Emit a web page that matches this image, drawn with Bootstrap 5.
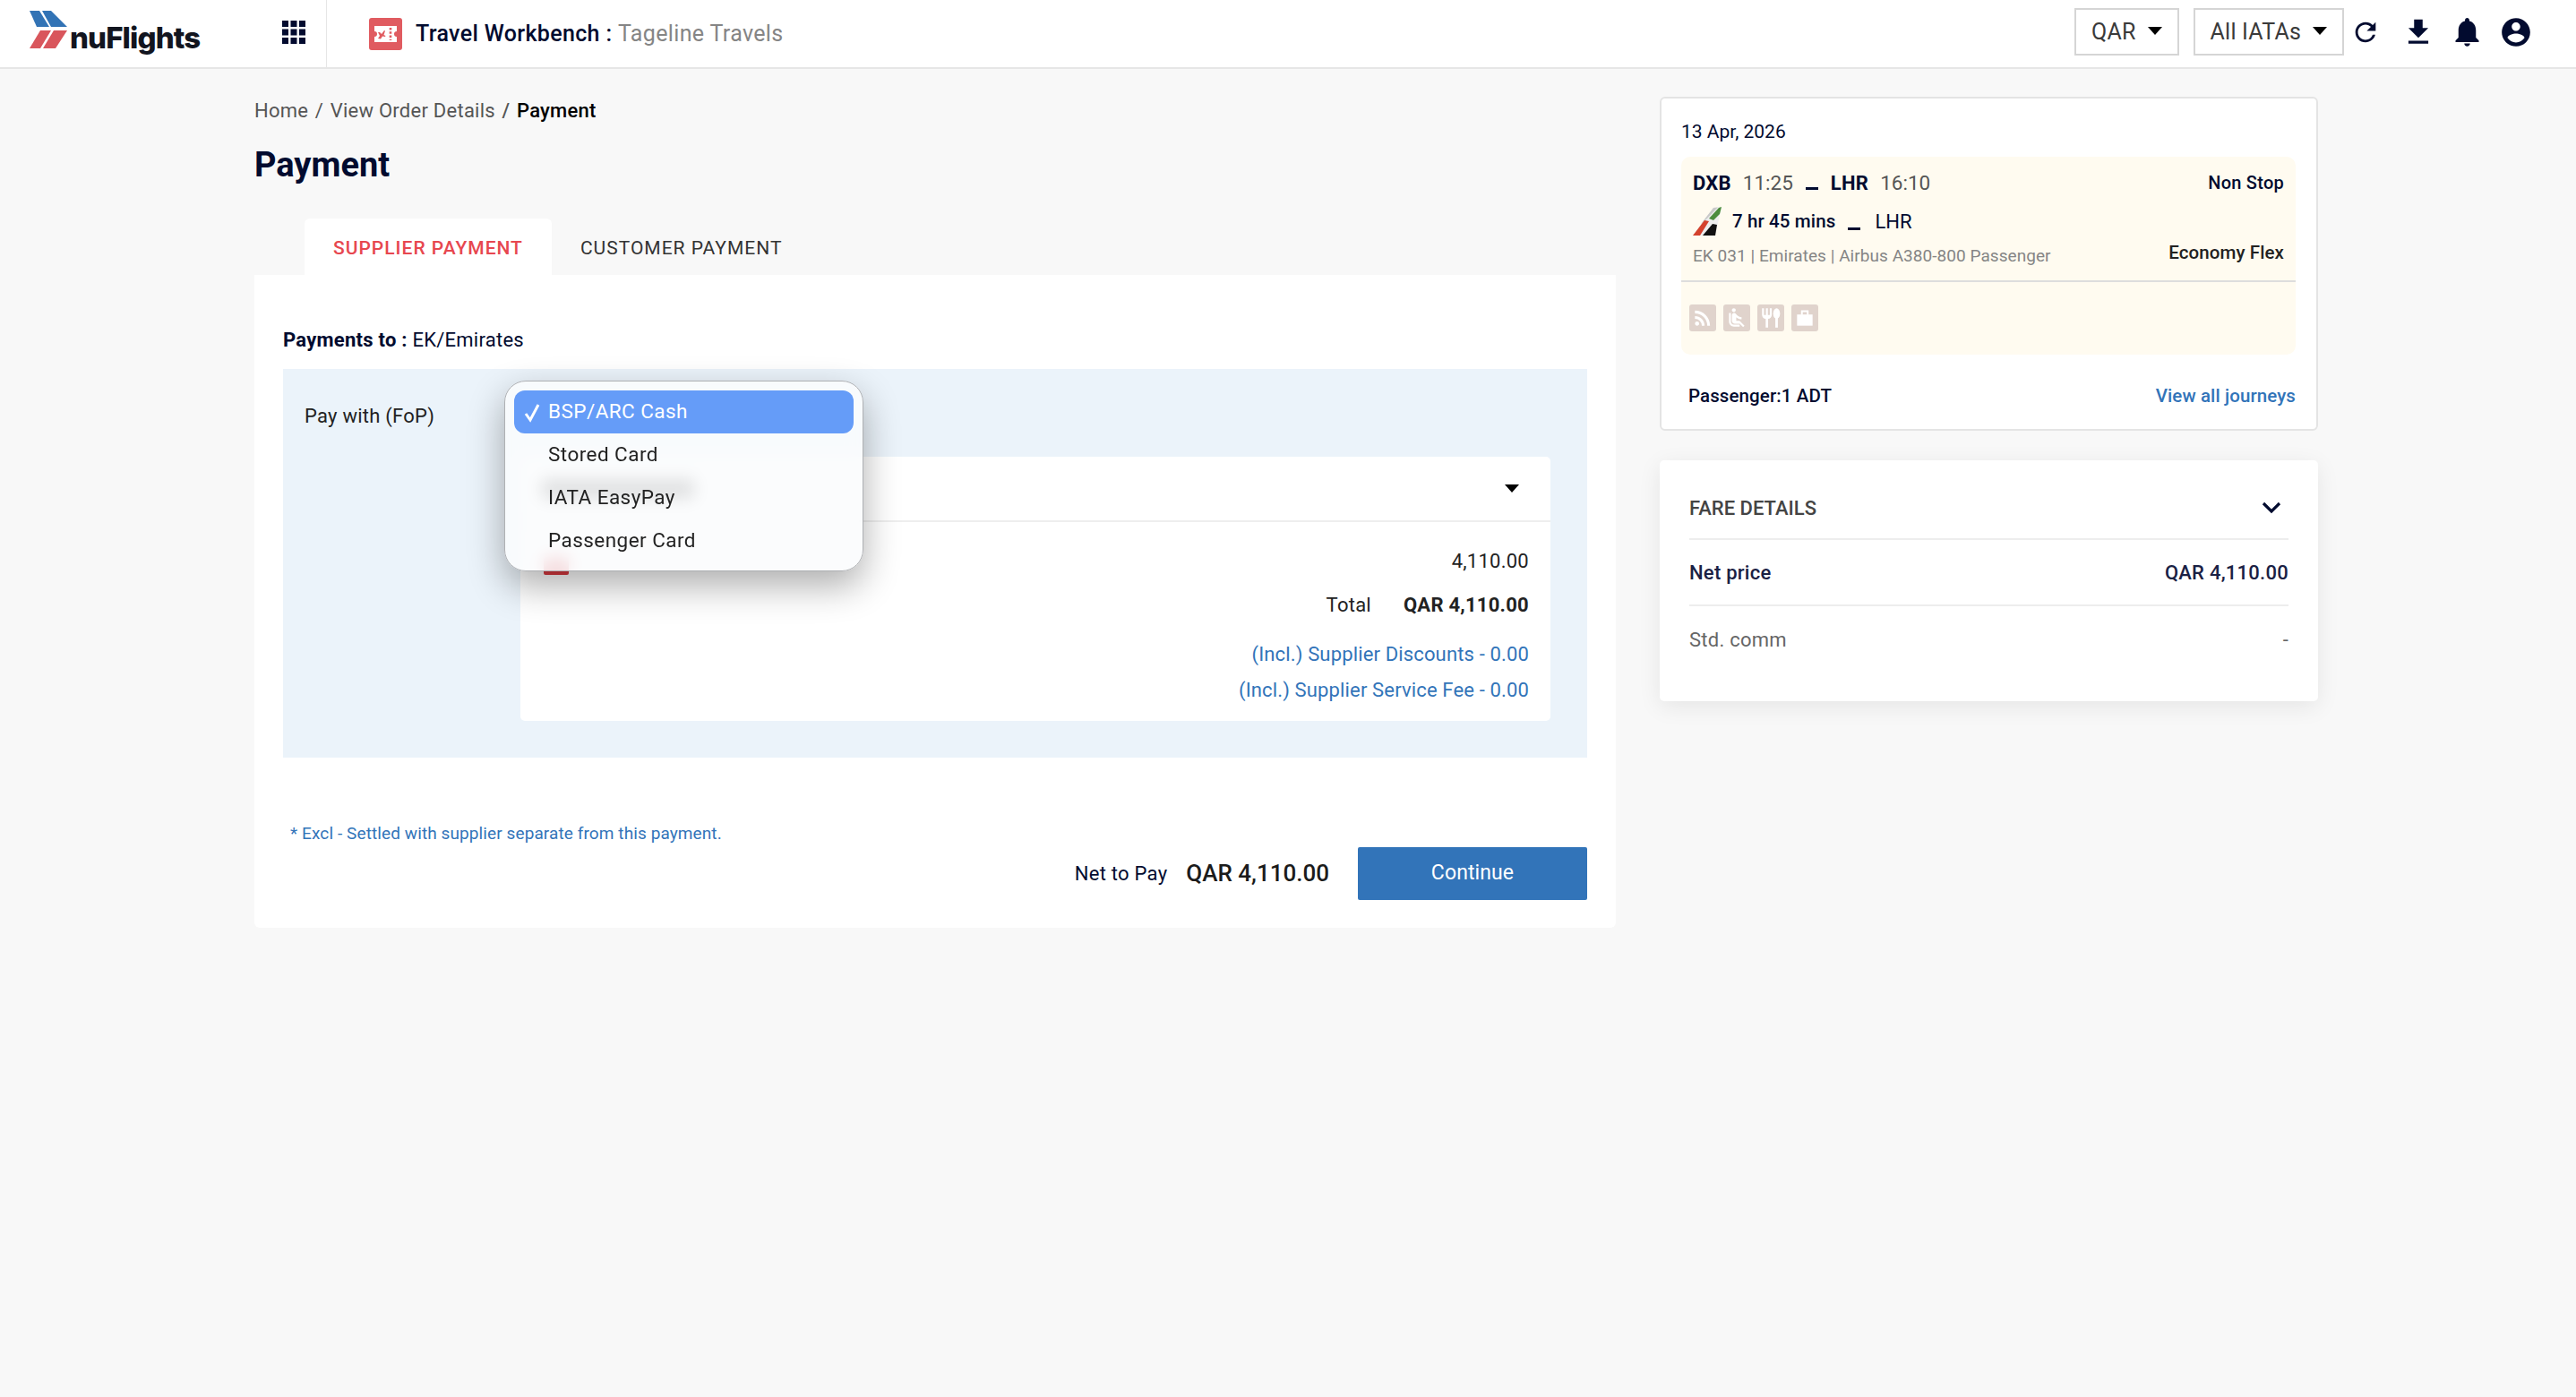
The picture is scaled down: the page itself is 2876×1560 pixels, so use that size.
<!DOCTYPE html>
<html lang="en">
<head>
  <meta charset="UTF-8">
  <meta name="viewport" content="width=device-width,initial-scale=1.0">
  <title>Payment</title>
  <link href="https://cdn.jsdelivr.net/npm/bootstrap@5.3.3/dist/css/bootstrap.min.css" rel="stylesheet"/>
  <style>
    body { background: #f8f8f8; font-family: Roboto, "Liberation Sans", sans-serif; font-size: 22px; color: #020b2f; letter-spacing: .25px; }
    .top-bar { height: 77px; padding: 0; background: #fff; border-bottom: 2px solid #e6e6e6; align-items: stretch; flex-wrap: nowrap; }
    .brand-cell { width: 365px; border-right: 1px solid #e6e6e6; padding-left: 33px; }
    .brand-logo { margin-top: 12px; }
    .brand-text { font-family: Inter, sans-serif; font-weight: 800; font-size: 33px; letter-spacing: -.9px; color: #12151f; margin-left: 1px; padding-top: 26px; line-height: 1; }
    .app-grid { margin-left: auto; margin-right: 23px; margin-top: 23px; }
    .bench-cell { padding-left: 47px; gap: 15px; font-size: 25px; }
    .bench-title { font-weight: 500; letter-spacing: .35px; }
    .bench-name { color: #858585; font-weight: 400; letter-spacing: .35px; }
    .pick-btn { height: 53px; border: 2px solid #d5d5d5; border-radius: 0; background: #fff; color: #3a3a3a; font-size: 25px; padding: 0 17px; letter-spacing: .2px; }
    .pick-btn::after { margin-left: 13px; vertical-align: 5px; border-top: 9px solid #000; border-right: 8px solid transparent; border-left: 8px solid transparent; border-bottom: 0; }
    .top-tools { gap: 16px; padding-right: 48px; padding-bottom: 4px; }
    .tool-group { gap: 16px; margin-left: -9px; }
    .tool-refresh { margin-right: 7px; }
    .page-wrap { padding: 0 0 0 284px; gap: 49px; align-items: flex-start; }
    .left-col { width: 1520px; }
    .right-col { width: 735px; padding-top: 31px; }
    .crumbs { padding-top: 30px; margin: 0; font-size: 22px; --bs-breadcrumb-divider-color: #555; --bs-breadcrumb-item-active-color: #000; --bs-breadcrumb-margin-bottom: 0; --bs-breadcrumb-item-padding-x: 7.6px; }
    .crumbs a { color: #555; text-decoration: none; }
    .crumbs .active { font-weight: 500; }
    .page-title { font-size: 38px; font-weight: 700; letter-spacing: 0; margin: 22px 0 38px; line-height: 44px; }
    .pay-tabs { padding-left: 56px; border: 0; gap: 0; }
    .pay-tabs .nav-link { height: 63px; border: 0; border-radius: 6px 6px 0 0; margin: 0; padding: 0 32px; font-size: 21px; letter-spacing: 1px; color: #333; line-height: 66px; }
    .pay-tabs .nav-link.active { color: #e7474f; font-weight: 500; background: #fff; }
    .main-panel { background: #fff; border-radius: 0 0 6px 6px; padding: 58px 32px 33px; height: 729px; }
    .pay-to { line-height: 30px; margin-bottom: 17px; }
    .pay-to b { font-weight: 700; }
    .fop-panel { background: #ebf3fa; padding: 98px 41px 41px 24px; position: relative; height: 434px; }
    .fop-label { width: 241px; margin-top: -60px; line-height: 30px; color: #222; }
    .amount-box { width: 1150px; background: #fff; border-radius: 5px; height: 295px; }
    .amount-head { height: 73px; border-bottom: 2px solid #eee; padding: 0 0 0 24px; }
    .amount-value { width: 170px; height: 22px; background: #4a4a4a; }
    .amount-caret { width: 0; height: 0; border-top: 9px solid #000; border-left: 8px solid transparent; border-right: 8px solid transparent; margin-right: 35px; }
    .amount-body { padding: 29px 24px 0 24px; color: #222; }
    .amount-line { height: 30px; line-height: 30px; }
    .line-total { margin-top: 19px; }
    .total-word { margin-right: 36px; }
    .line-disc { margin-top: 25px; }
    .line-fee { margin-top: 10px; }
    .card-mark { width: 28px; height: 20px; background: #d93a40; margin-top: 10px; margin-right: auto; border-radius: 2px; margin-left: 2px; }
    .fee-note { color: #3274b9; letter-spacing: .15px; }
    .fop-menu { display: block; top: 13px; left: 247px; width: 401px; height: 213px; padding: 10px; border: 1px solid #aeb0b3; border-radius: 24px; background: rgba(250,251,253,.85); backdrop-filter: blur(9px); box-shadow: 0 16px 40px rgba(0,0,0,.32); }
    .fop-menu .dropdown-item { height: 48px; padding: 0 0 0 38px; line-height: 46px; border-radius: 12px; font-size: 22.5px; letter-spacing: .45px; color: #222; position: relative; }
    .fop-menu .dropdown-item.active { background: #659cf8; color: #fff; }
    .tick { position: absolute; left: 10px; top: 14px; }
    .foot-note { color: #3274b9; font-size: 19px; margin: 73px 0 0 8px; line-height: 24px; letter-spacing: .1px; }
    .foot-row { margin-top: 3px; }
    .net-label { margin-right: 21px; }
    .net-value { font-size: 26px; font-weight: 500; letter-spacing: 0; color: #1b1b1b; margin-right: 32px; }
    .go-btn { width: 256px; height: 59px; border: 0; border-radius: 2px; background: #3274b9; font-size: 23px; letter-spacing: .1px; }
    .trip-card { height: 373px; border: 2px solid #e4e4e4; border-radius: 6px; padding: 22px 23px 0 22px; --bs-card-bg: #fff; font-size: 20px; }
    .trip-date { font-size: 21px; line-height: 30px; margin-bottom: 13px; letter-spacing: 0; }
    .seg-top { background: #fffbf0; border-radius: 10px 10px 0 0; border-bottom: 2px solid #ddd; height: 140px; padding: 14px 13px 0; position: relative; }
    .seg-row { line-height: 30px; height: 30px; }
    .seg-row b { font-weight: 700; font-size: 22px; }
    .seg-grey { color: #555; font-size: 22.5px; letter-spacing: 0; margin-left: 13px; }
    .dash { display: inline-block; width: 14px; border-bottom: 3px solid #020b2f; margin: 0 14px; height: 20px; }
    .seg-mid { height: 44px; margin-top: 6px; }
    .seg-tail { margin-right: 12px; }
    .seg-mid b { font-weight: 500; font-size: 20.5px; letter-spacing: .12px; }
    .seg-mid .dash { margin: 0 13px 0 14px; }
    .seg-mid .lhr { font-size: 22px; letter-spacing: 0; color: #020b2f; margin-left: 3px; }
    .seg-flight { color: #858585; font-size: 19px; letter-spacing: .05px; margin-top: 3px; }
    .seg-class { color: #222; font-weight: 500; font-size: 20.5px; letter-spacing: .1px; margin-top: -2px; }
    .seg-bottom { background: #fffbf0; border-radius: 0 0 10px 10px; height: 81px; padding: 25px 9px 0; gap: 8px; }
    .amen { width: 30px; height: 30px; background: #e0d3cc; border-radius: 3px; padding: 2px; }
    .trip-foot { padding: 31px 0 0 8px; font-weight: 500; font-size: 20.5px; letter-spacing: .1px; }
    .trip-foot a { color: #3274b9; text-decoration: none; }
    .fare-card { margin-top: 33px; height: 269px; border: 0; border-radius: 5px; box-shadow: 0 6px 26px rgba(0,0,0,.08); padding: 33px 33px 0; }
    .fare-row { height: 74px; border-bottom: 2px solid #ededed; }
    .fare-head { height: 56px; color: #444; padding-bottom: 14px; }
    .fare-head span { font-weight: 500; font-size: 22px; letter-spacing: 0; }
    .fare-row.last { border: 0; color: #666; }
    .fare-strong { font-weight: 500; color: #1a2144; }
  </style>
</head>
<body>
<nav class="navbar top-bar">
  <div class="d-flex align-items-start brand-cell">
    <svg class="brand-logo flex-shrink-0" width="44" height="44" viewBox="33 12 44 44">
      <polygon points="33,12 44,12 55,30 41,30" fill="#3273b5"/><polygon points="47,12 57,12 75,30 57,30" fill="#3273b5"/>
      <polygon points="45,34 57,34 45,54 33,54" fill="#d9565c"/><polygon points="60,34 75,34 62,54 48,54" fill="#d9565c"/>
    </svg>
    <span class="brand-text">nuFlights</span>
    <svg class="app-grid" width="26" height="26" viewBox="0 0 26 26" fill="#020b2f">
      <rect width="7" height="7"/><rect x="9.5" width="7" height="7"/><rect x="19" width="7" height="7"/>
      <rect y="9.5" width="7" height="7"/><rect x="9.5" y="9.5" width="7" height="7"/><rect x="19" y="9.5" width="7" height="7"/>
      <rect y="19" width="7" height="7"/><rect x="9.5" y="19" width="7" height="7"/><rect x="19" y="19" width="7" height="7"/>
    </svg>
  </div>
  <div class="d-flex align-items-center bench-cell flex-grow-1">
    <svg width="37" height="36" viewBox="0 0 37 36">
      <rect width="37" height="36" rx="3" fill="#e05b60"/>
      <path d="M6 9h25v6a3 3 0 0 0 0 6v6H6v-6a3 3 0 0 0 0-6z" fill="#fff"/>
      <path d="M10 23l2-3-2-4 2 0 2 2 3-4 1 .5-1.500 4.500 2 1-.5 1-3-.5-2 3z" fill="#e05b60"/>
      <path d="M24 11v14" stroke="#e05b60" stroke-width="2.600" stroke-dasharray="2.500 1.800"/>
    </svg>
    <div class="bench-title">Travel Workbench : <span class="bench-name">Tageline Travels</span></div>
  </div>
  <div class="d-flex align-items-center top-tools">
    <button class="btn dropdown-toggle pick-btn" type="button">QAR</button>
    <button class="btn dropdown-toggle pick-btn" type="button">All IATAs</button>
    <div class="d-flex align-items-center tool-group">
      <svg class="tool-refresh" width="34" height="34" viewBox="0 0 24 24" fill="#020b2f"><path d="M17.65 6.35A7.958 7.958 0 0 0 12 4c-4.42 0-7.99 3.58-7.99 8s3.57 8 7.990 8c3.73 0 6.84-2.55 7.73-6h-2.08A5.99 5.99 0 0 1 12 18c-3.31 0-6-2.690-6-6s2.690-6 6-6c1.660 0 3.140.69 4.220 1.780L13 11h7V4l-2.350 2.350z"/></svg>
      <svg width="38" height="38" viewBox="0 0 24 24" fill="#020b2f"><path d="M19 9h-4V3H9v6H5l7 7 7-7zM5 18v2h14v-2H5z"/></svg>
      <svg width="39" height="39" viewBox="0 0 24 24" fill="#020b2f"><path d="M12 22c1.100 0 2-.9 2-2h-4c0 1.100.89 2 2 2zm6-6v-5c0-3.070-1.640-5.640-4.500-6.320V4c0-.83-.67-1.500-1.500-1.500s-1.500.67-1.500 1.500v.68C7.630 5.360 6 7.920 6 11v5l-2 2v1h16v-1l-2-2z"/></svg>
      <svg width="38" height="38" viewBox="0 0 24 24" fill="#020b2f"><path d="M12 2C6.480 2 2 6.480 2 12s4.480 10 10 10 10-4.480 10-10S17.520 2 12 2zm0 3c1.660 0 3 1.340 3 3s-1.340 3-3 3-3-1.340-3-3 1.340-3 3-3zm0 14.200c-2.500 0-4.710-1.280-6-3.220.03-1.990 4-3.080 6-3.080 1.990 0 5.970 1.090 6 3.080-1.290 1.940-3.500 3.220-6 3.220z"/></svg>
    </div>
  </div>
</nav>

<div class="d-flex page-wrap">
  <div class="left-col">
    <ol class="breadcrumb crumbs">
      <li class="breadcrumb-item"><a href="#">Home</a></li>
      <li class="breadcrumb-item"><a href="#">View Order Details</a></li>
      <li class="breadcrumb-item active">Payment</li>
    </ol>
    <h1 class="page-title">Payment</h1>
    <ul class="nav nav-tabs pay-tabs">
      <li class="nav-item"><a class="nav-link active" href="#">SUPPLIER PAYMENT</a></li>
      <li class="nav-item"><a class="nav-link" href="#">CUSTOMER PAYMENT</a></li>
    </ul>
    <div class="main-panel">
      <div class="pay-to"><b>Payments to :</b> EK/Emirates</div>
      <div class="d-flex fop-panel">
        <div class="fop-label">Pay with (FoP)</div>
        <div class="amount-box">
          <div class="d-flex align-items-center justify-content-between amount-head">
            <span class="amount-value"></span>
            <span class="amount-caret"></span>
          </div>
          <div class="amount-body">
            <div class="d-flex justify-content-end amount-line"><span class="card-mark"></span><span>4,110.00</span></div>
            <div class="d-flex justify-content-end amount-line line-total"><span class="total-word">Total</span><b class="fw-bold">QAR 4,110.00</b></div>
            <div class="text-end amount-line fee-note line-disc">(Incl.) Supplier Discounts - 0.00</div>
            <div class="text-end amount-line fee-note line-fee">(Incl.) Supplier Service Fee - 0.00</div>
          </div>
        </div>
        <div class="dropdown-menu fop-menu">
          <a class="dropdown-item active" href="#"><svg class="tick" width="20" height="22" viewBox="0 0 20 22"><path d="M3 12l5 7L17 2" fill="none" stroke="#fff" stroke-width="3"/></svg>BSP/ARC Cash</a>
          <a class="dropdown-item" href="#">Stored Card</a>
          <a class="dropdown-item" href="#">IATA EasyPay</a>
          <a class="dropdown-item" href="#">Passenger Card</a>
        </div>
      </div>
      <div class="foot-note">* Excl - Settled with supplier separate from this payment.</div>
      <div class="d-flex justify-content-end align-items-center foot-row">
        <span class="net-label">Net to Pay</span>
        <span class="net-value">QAR 4,110.00</span>
        <button class="btn btn-primary go-btn" type="button">Continue</button>
      </div>
    </div>
  </div>

  <div class="right-col">
    <div class="card trip-card">
      <div class="trip-date">13 Apr, 2026</div>
      <div class="seg-top">
        <div class="d-flex justify-content-between seg-row">
          <div><b>DXB</b><span class="seg-grey">11:25</span><span class="dash"></span><b>LHR</b><span class="seg-grey">16:10</span></div>
          <span class="fw-medium">Non Stop</span>
        </div>
        <div class="d-flex align-items-center seg-mid">
          <svg class="seg-tail" width="32" height="32" viewBox="0 0 32 32">
            <polygon points="23,1 32,0 25,32 0,32" fill="#eeeeee"/>
            <polygon points="23,1 28,.5 12,17 9,19" fill="#c9c9c9"/>
            <polygon points="32,0 29,1 18,13 23,15 30,8" fill="#4c8c3e"/>
            <polygon points="0,32 8,32 18,16 13,15" fill="#d4422d"/>
            <polygon points="11,32 25,32 27,20 22,19" fill="#111111"/>
          </svg>
          <b>7 hr 45 mins</b><span class="dash"></span><span class="lhr">LHR</span>
        </div>
        <div class="d-flex justify-content-between">
          <span class="seg-flight">EK 031 | Emirates | Airbus A380-800 Passenger</span>
          <span class="seg-class">Economy Flex</span>
        </div>
      </div>
      <div class="d-flex seg-bottom">
        <div class="amen"><svg class="d-block" width="26" height="26" viewBox="0 0 24 24" fill="#fff"><path d="M6.180 15.640a2.180 2.180 0 0 1 2.180 2.180C8.360 19 7.380 20 6.180 20 5 20 4 19 4 17.820a2.180 2.180 0 0 1 2.180-2.180M4 4.440A15.560 15.560 0 0 1 19.560 20h-2.830A12.730 12.730 0 0 0 4 7.270V4.440m0 5.660a9.900 9.900 0 0 1 9.900 9.900h-2.830A7.070 7.070 0 0 0 4 12.930V10.100z"/></svg></div>
        <div class="amen"><svg class="d-block" width="26" height="26" viewBox="0 0 24 24" fill="#fff"><path d="M7.590 5.410c-.78-.78-.78-2.050 0-2.830.78-.78 2.050-.78 2.830 0 .78.78.78 2.050 0 2.830-.79.79-2.050.79-2.830 0zM6 16V7H4v9c0 2.760 2.240 5 5 5h6v-2H9c-1.660 0-3-1.340-3-3zm14 4.070L14.930 15H11.500v-3.680c1.400 1.150 3.600 2.160 5.500 2.160v-2.160c-1.660.02-3.610-.87-4.670-2.040l-1.400-1.550c-.19-.21-.43-.38-.69-.5-.29-.14-.62-.23-.96-.23h-.03C8.010 7 7 8.010 7 9.250V15c0 1.660 1.340 3 3 3h5.070l3.500 3.500L20 20.070z"/></svg></div>
        <div class="amen"><svg class="d-block" width="26" height="26" viewBox="0 0 24 24" fill="#fff"><path d="M11 9H9V2H7v7H5V2H3v7c0 2.120 1.660 3.840 3.750 3.970V22h2.500v-9.030C11.340 12.840 13 11.120 13 9V2h-2v7z"/><ellipse cx="18" cy="7.500" rx="3.500" ry="5.500"/><rect x="16.700" y="12" width="2.600" height="10"/></svg></div>
        <div class="amen"><svg class="d-block" width="26" height="26" viewBox="0 0 24 24" fill="#fff"><path d="M4 8.500h16v11.500H4z"/><path d="M9 9V5h6v4" fill="none" stroke="#fff" stroke-width="1.800"/></svg></div>
      </div>
      <div class="d-flex justify-content-between trip-foot">
        <span>Passenger:1 ADT</span>
        <a href="#">View all journeys</a>
      </div>
    </div>

    <div class="card fare-card">
      <div class="d-flex justify-content-between align-items-center fare-row fare-head">
        <span>FARE DETAILS</span>
        <svg class="me-2" width="22" height="14" viewBox="0 0 22 14"><path d="M2 2l9 9 9-9" fill="none" stroke="#020b2f" stroke-width="3.200"/></svg>
      </div>
      <div class="d-flex justify-content-between align-items-center fare-row fare-strong">
        <span>Net price</span><span>QAR 4,110.00</span>
      </div>
      <div class="d-flex justify-content-between align-items-center fare-row last">
        <span>Std. comm</span><span>-</span>
      </div>
    </div>
  </div>
</div>
<script src="https://cdn.jsdelivr.net/npm/bootstrap@5.3.3/dist/js/bootstrap.bundle.min.js"></script>
</body>
</html>
